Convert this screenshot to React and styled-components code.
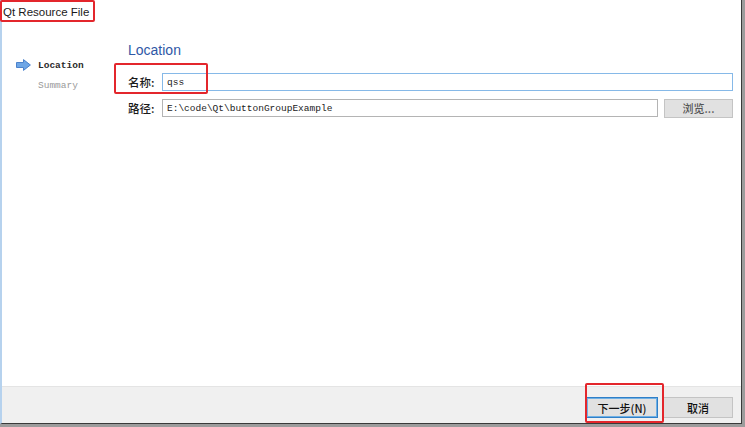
import React from 'react'
import styled, { createGlobalStyle } from 'styled-components'

const GlobalStyle = createGlobalStyle`
  html, body {
    margin: 0;
    padding: 0;
    background: #9c9c9c;
  }
  body {
    width: 745px;
    height: 427px;
    overflow: hidden;
    font-family: "Liberation Sans", "Noto Sans CJK SC", sans-serif;
  }
`

const Window = styled.div`
  position: relative;
  display: flex;
  flex-direction: column;
  width: 742px;
  height: 424px;
  background: #fff;
  border-left: 2px solid #b6d2ee;
  border-right: 1px solid #3a3a3a;
  border-bottom: 1px solid #3a3a3a;
  box-sizing: border-box;
`

const TitleBar = styled.div`
  height: 24px;
  display: flex;
  align-items: center;
  padding-left: 1px;
  font-size: 11.5px;
  color: #1a1a1a;
`

const Body = styled.div`
  flex: 1;
  display: flex;
`

const Sidebar = styled.div`
  width: 126px;
  padding: 31px 0 0 14px;
  box-sizing: border-box;
  display: flex;
  flex-direction: column;
`

const Step = styled.div`
  display: flex;
  align-items: center;
  height: 20px;
  gap: 6px;
  font-family: "Liberation Mono", monospace;
  font-size: 9.5px;
  font-weight: ${(p) => (p.active ? 700 : 400)};
  color: ${(p) => (p.active ? '#2a2a2a' : '#9a9a9a')};
`

const ArrowSlot = styled.span`
  width: 16px;
  display: flex;
  align-items: center;
`

const Main = styled.div`
  flex: 1;
  padding: 17px 8px 0 0;
  display: flex;
  flex-direction: column;
`

const Heading = styled.div`
  font-size: 14px;
  line-height: 18px;
  color: #2f58a6;
  margin-bottom: 14px;
`

const Row = styled.div`
  display: flex;
  align-items: center;
  height: 18px;
  margin-bottom: 8px;
  gap: 6px;
`

const Label = styled.span`
  width: 28px;
  font-family: "Noto Sans CJK SC", sans-serif;
  font-size: 11.5px;
  font-weight: 500;
  color: #1a1a1a;
  white-space: nowrap;
`

const Field = styled.div`
  flex: 1;
  height: 18px;
  box-sizing: border-box;
  border: 1px solid ${(p) => (p.focused ? '#86b9e8' : '#b4b4b4')};
  display: flex;
  align-items: center;
  padding-left: 4px;
  font-family: "Liberation Mono", monospace;
  font-size: 9.5px;
  color: #222;
`

const Button = styled.div`
  width: ${(p) => p.w}px;
  height: ${(p) => p.h}px;
  box-sizing: border-box;
  display: flex;
  align-items: center;
  justify-content: center;
  background: #e1e1e1;
  border: 1px solid ${(p) => (p.primary ? '#2f7fc8' : '#c4c4c4')};
  box-shadow: ${(p) => (p.primary ? 'inset 0 0 0 1px #6fb0e4' : 'none')};
  font-family: "Noto Sans CJK SC", sans-serif;
  font-size: 11px;
  font-weight: 500;
  color: ${(p) => (p.dim ? '#555' : '#111')};
`

const Footer = styled.div`
  height: 37px;
  box-sizing: border-box;
  background: #f0f0f0;
  border-top: 1px solid #e4e4e4;
  display: flex;
  justify-content: flex-end;
  align-items: flex-start;
  padding: 10px 8px 0 0;
  gap: 5px;
`

const Mark = styled.div`
  position: absolute;
  left: ${(p) => p.x}px;
  top: ${(p) => p.y}px;
  width: ${(p) => p.w}px;
  height: ${(p) => p.h}px;
  box-sizing: border-box;
  border: 2px solid #e3262c;
  border-radius: 2px;
  pointer-events: none;
`

const Arrow = () => (
  <svg width="15" height="12" viewBox="0 0 15 12">
    <path d="M0.5 3.5 H7.5 V0.6 L14.4 6 L7.5 11.4 V8.5 H0.5 Z" fill="#6ea6e6" stroke="#4b82cc" strokeWidth="1" />
  </svg>
)

export default function App() {
  return (
    <>
      <GlobalStyle />
      <Window>
        <TitleBar>Qt Resource File</TitleBar>
        <Body>
          <Sidebar>
            <Step active>
              <ArrowSlot><Arrow /></ArrowSlot>
              Location
            </Step>
            <Step>
              <ArrowSlot />
              Summary
            </Step>
          </Sidebar>
          <Main>
            <Heading>Location</Heading>
            <Row>
              <Label>名称:</Label>
              <Field focused>qss</Field>
            </Row>
            <Row>
              <Label>路径:</Label>
              <Field>E:\code\Qt\buttonGroupExample</Field>
              <Button w={69} h={19} dim>浏览...</Button>
            </Row>
          </Main>
        </Body>
        <Footer>
          <Button w={72} h={21} primary>下一步(N)</Button>
          <Button w={70} h={21}>取消</Button>
        </Footer>
        <Mark x={-2} y={0} w={95} h={22} />
        <Mark x={112} y={63} w={94} h={31} />
        <Mark x={583} y={383} w={79} h={40} />
      </Window>
    </>
  )
}
